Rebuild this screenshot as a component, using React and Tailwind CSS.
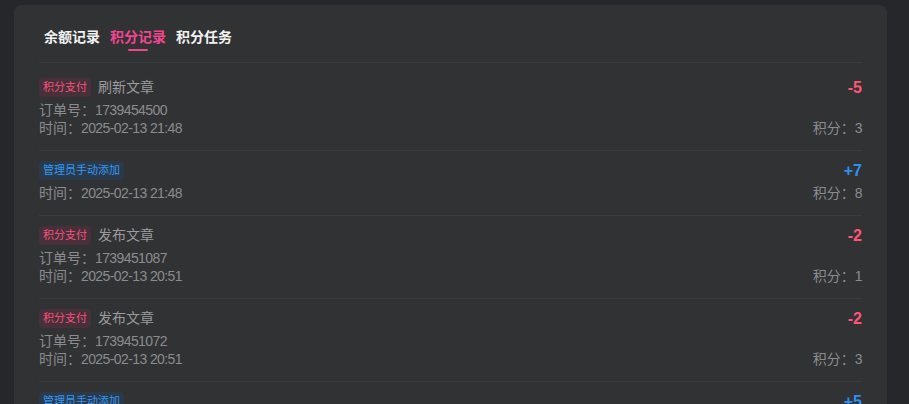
const records = [
  { type: 'pay', title: '刷新文章', order: '1739454500', time: '2025-02-13 21:48', amount: '-5', balance: 3 },
  { type: 'admin', time: '2025-02-13 21:48', amount: '+7', balance: 8 },
  { type: 'pay', title: '发布文章', order: '1739451087', time: '2025-02-13 20:51', amount: '-2', balance: 1 },
  { type: 'pay', title: '发布文章', order: '1739451072', time: '2025-02-13 20:51', amount: '-2', balance: 3 },
  { type: 'admin', time: '2025-02-13 20:40', amount: '+5', balance: 5 },
]

function Tag({ type }) {
  if (type === 'pay') {
    return (
      <span className="h-[19px] leading-[19px] px-1 rounded text-[11px] bg-[#48303a] text-[#f5527c]">
        积分支付
      </span>
    )
  }
  return (
    <span className="h-[19px] leading-[19px] px-1 rounded text-[11px] bg-[#2b3a4b] text-[#3198f5]">
      管理员手动添加
    </span>
  )
}

function Field({ label, value }) {
  return (
    <span>
      {label}：<span className="tracking-[-0.6px]">{value}</span>
    </span>
  )
}

function RecordRow({ item }) {
  const isPay = item.type === 'pay'
  return (
    <div className="pt-[10px] pb-[13px] border-b border-[#3a3b3e]">
      <div className="flex items-center justify-between h-[19px]">
        <div className="flex items-center gap-[7px]">
          <Tag type={item.type} />
          {item.title && <span className="text-[14px] text-[#9a9b9e]">{item.title}</span>}
        </div>
        <span className={`text-[16px] font-bold ${isPay ? 'text-[#ff5577]' : 'text-[#2e90f0]'}`}>
          {item.amount}
        </span>
      </div>
      <div className="mt-1 text-[14px] leading-[18px] text-[#8b8c8f]">
        {item.order && (
          <p>
            <Field label="订单号" value={item.order} />
          </p>
        )}
        <div className="flex justify-between">
          <Field label="时间" value={item.time} />
          <Field label="积分" value={item.balance} />
        </div>
      </div>
    </div>
  )
}

export default function App() {
  const tabs = ['余额记录', '积分记录', '积分任务']
  return (
    <div
      className="h-[404px] overflow-hidden bg-[#26272a] pt-[5px] pl-[14px]"
      style={{ fontFamily: '"Liberation Sans", "Noto Sans CJK SC", sans-serif' }}
    >
      <div className="w-[873px] min-h-[500px] rounded-lg bg-[#313234] px-[25px] pt-5">
        <div className="flex pb-[11px] border-b border-[#3a3b3e]">
          {tabs.map((t, i) => (
            <div key={t} className="px-[5px] flex flex-col items-center">
              <span className={`text-[14px] leading-6 font-bold ${i === 1 ? 'text-[#f0468f]' : 'text-[#f2f2f2]'}`}>
                {t}
              </span>
              <span className={`h-[2px] w-5 rounded ${i === 1 ? 'bg-[#f0468f]' : 'bg-transparent'}`} />
            </div>
          ))}
        </div>
        <div className="pt-[5px]">
          {records.map((r, i) => (
            <RecordRow key={i} item={r} />
          ))}
        </div>
      </div>
    </div>
  )
}
